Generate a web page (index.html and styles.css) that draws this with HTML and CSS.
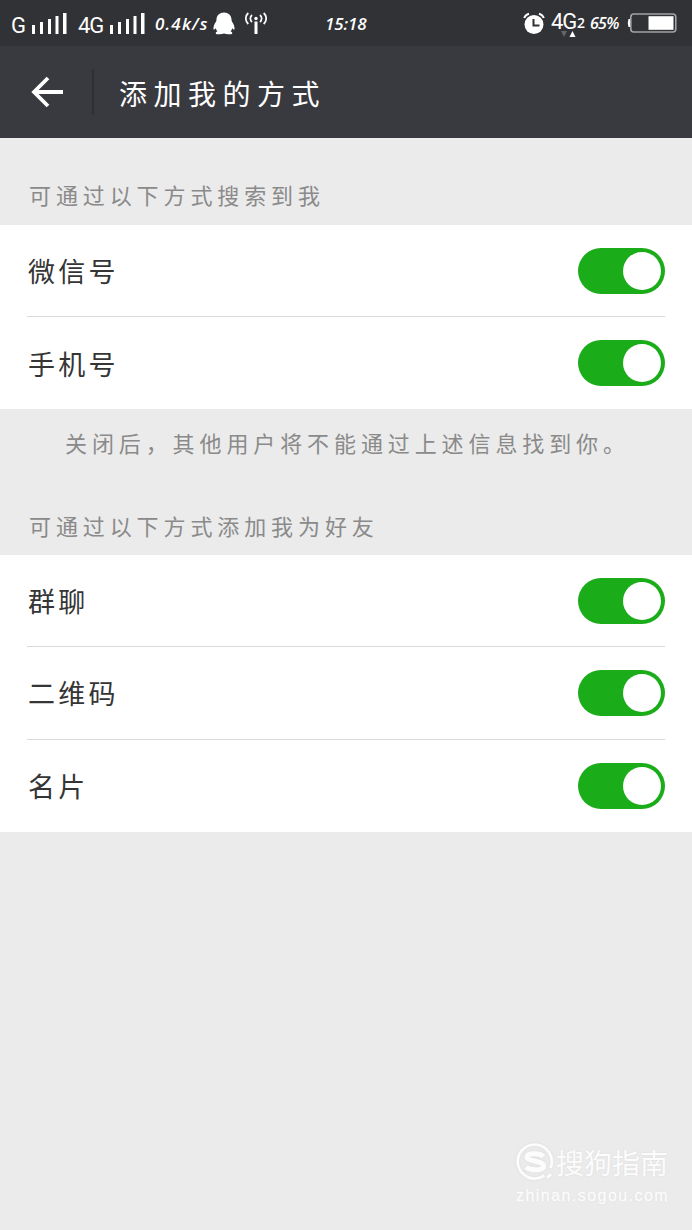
FILE: index.html
```
<!DOCTYPE html>
<html lang="zh-CN">
<head>
  <meta charset="UTF-8">
  <meta name="viewport" content="width=device-width, initial-scale=1">
  <title>添加我的方式</title>
  <link rel="stylesheet" href="styles.css">
</head>
<body>
  <!-- status bar -->
  <div class="status-bar">
    <div class="status-left">
      <span class="network g">G</span>
      <svg class="signal first" width="35" height="22" viewBox="0 0 35 22" fill="#fff">
        <path d="M0 12h3v9H0zM8 9h3v12H8zM16 6h3v15h-3zM23.500 3h3v18h-3zM31 0h3.500v21H31z"/>
      </svg>
      <span class="network g4">4G</span>
      <svg class="signal" width="35" height="22" viewBox="0 0 35 22" fill="#fff">
        <path d="M0 12h3v9H0zM8 9h3v12H8zM16 6h3v15h-3zM23.500 3h3v18h-3zM31 0h3.500v21H31z"/>
      </svg>
      <span class="speed">0.4k/s</span>
      <svg class="penguin" width="22" height="23" viewBox="0 0 22 23" fill="#fff">
        <path d="M11 0.500C6.600 0.500 3.500 3.600 3.500 7.500c0 1-.2 1.700-.7 2.600C1.100 12.500.2 15 .5 17.200c.3.900 1.200.3 2.200-1 .3 1.300.9 2.300 1.800 3.100-1.400.6-2 1.300-1.700 2.200.5 1.200 6 1 8.200.1 2.200.9 7.700 1.100 8.200-.1.300-.9-.3-1.600-1.700-2.200.9-.8 1.500-1.800 1.800-3.100 1 1.300 1.900 1.900 2.200 1 .3-2.200-.6-4.700-2.300-7.100-.5-.9-.7-1.600-.7-2.600C18.500 3.600 15.400.5 11 .5z"/>
      </svg>
      <svg class="antenna" width="22" height="22" viewBox="0 0 22 22" fill="none" stroke="#fff" stroke-width="1.700">
        <path d="M3.300 1C0 4 0 9 3.300 12M7 3C4.800 5 4.800 8 7 10M15 3c2.200 2 2.200 5 0 7M18.700 1C22 4 22 9 18.700 12"/>
        <circle cx="11" cy="6.500" r="1.700" fill="#fff" stroke="none"/>
        <path d="M11 9.500V22" stroke-width="3"/>
      </svg>
    </div>
    <span class="clock">15:18</span>
    <div class="status-right">
      <svg width="22" height="23" viewBox="0 0 22 23">
        <circle cx="11" cy="12.500" r="9.500" fill="#fff"/>
        <path d="M1.200 6A7 7 0 0 1 6 1.700M16 1.700A7 7 0 0 1 20.800 6" fill="none" stroke="#fff" stroke-width="2"/>
        <path d="M10.500 7v6.500h6" fill="none" stroke="#313236" stroke-width="2"/>
      </svg>
      <div class="data">
        <span class="network g4">4G</span><span class="sim">2</span>
        <svg class="arrows" width="16" height="7" viewBox="0 0 16 7">
          <path d="M1 0h6L4 6z" fill="#65666a"/>
          <path d="M9.500 6h6l-3-6z" fill="#fff"/>
        </svg>
      </div>
      <span class="percent">65%</span>
      <svg class="battery" width="50" height="20" viewBox="0 0 50 20">
        <path d="M3 6H1.500Q0 10 1.500 14H3z" fill="#fff"/>
        <rect x="3.800" y="1" width="45" height="18" rx="3" fill="none" stroke="#a2a3a5" stroke-width="1.600"/>
        <path d="M21.500 3.200H46.500v13.600h-25z" fill="#fff"/>
      </svg>
    </div>
  </div>

  <div class="nav-bar">
    <svg class="back" width="32" height="32" viewBox="0 0 32 32" fill="none" stroke="#fff" stroke-width="3.800">
      <path d="M17 2L3 16l14 14M3 16h29"/>
    </svg>
    <div class="nav-line"></div>
    <h1>添加我的方式</h1>
  </div>

  <div class="section-title">可通过以下方式搜索到我</div>
  <div class="list">
    <div class="row"><span>微信号</span><div class="switch"></div></div>
    <div class="row"><span>手机号</span><div class="switch"></div></div>
  </div>
  <p class="note">关闭后，其他用户将不能通过上述信息找到你。</p>

  <div class="section-title second">可通过以下方式添加我为好友</div>
  <div class="list friends">
    <div class="row"><span>群聊</span><div class="switch"></div></div>
    <div class="row"><span>二维码</span><div class="switch"></div></div>
    <div class="row"><span>名片</span><div class="switch"></div></div>
  </div>

  <div class="watermark">
    <div class="brand">
      <svg width="38" height="38" viewBox="0 0 38 38" fill="none" stroke="#fcfcfc">
        <path d="M28.500 32.500A17 17 0 1 1 34.500 25" stroke-width="2.800"/>
        <path d="M27.500 13.500C24 10 11 9.500 11 14s16.500 3.500 16.500 9-13.500 4.500-17.500 1" stroke-width="5"/>
        <path d="M31 35l4-4" stroke-width="3"/>
      </svg>
      <span>搜狗指南</span>
    </div>
    <div class="site">zhinan.sogou.com</div>
  </div>
</body>
</html>
```
FILE: styles.css
```
* {
  box-sizing: border-box;
  margin: 0;
  padding: 0;
}

body {
  position: relative;
  height: 1230px;
  overflow: hidden;
  background-color: #ebebeb;
  font-family: "Noto Sans CJK SC", sans-serif;
}

svg {
  display: block;
  flex-shrink: 0;
}

/* status bar */
.status-bar {
  display: flex;
  align-items: center;
  height: 46px;
  padding: 0 15px 0 11px;
  background-color: #313236;
  color: #fff;
  white-space: nowrap;
}

.status-left {
  display: flex;
  align-items: center;
  width: 314px;
}

.network {
  font-family: Roboto, sans-serif;
  font-size: 22px;
  line-height: 24px;
}

.g {
  width: 21px;
  padding-top: 5px;
}

.g4 {
  width: 32px;
  padding-top: 5px;
  letter-spacing: -1px;
}

.signal {
  margin-top: 2px;
}

.signal.first {
  margin-right: 11px;
}

.speed,
.clock,
.percent {
  font-family: "Open Sans", sans-serif;
  font-style: italic;
  font-weight: 600;
  line-height: 24px;
}

.speed {
  width: 57px;
  margin-left: 10px;
  margin-top: 1px;
  font-size: 17px;
  letter-spacing: 1.2px;
}

.penguin {
  margin-left: 1px;
}

.antenna {
  margin-left: 10px;
}

.clock {
  font-size: 17px;
  margin-top: 1px;
  letter-spacing: -0.1px;
}

.status-right {
  display: flex;
  align-items: center;
  margin-left: auto;
}

.data {
  position: relative;
  display: flex;
  align-items: center;
  width: 39px;
  margin-left: 6px;
}

.data .network {
  width: 26px;
  padding: 0 0 2px;
}

.sim {
  font-family: "Open Sans", sans-serif;
  font-size: 14px;
  font-weight: 600;
  line-height: 20px;
}

.arrows {
  position: absolute;
  left: 9px;
  bottom: -2px;
}

.percent {
  width: 37px;
  font-size: 16px;
  letter-spacing: -0.7px;
}

/* title bar */
.nav-bar {
  display: flex;
  align-items: center;
  height: 92px;
  padding-left: 31px;
  background-color: #393a3f;
}

.nav-line {
  width: 2px;
  height: 46px;
  margin: 0 25px 0 29px;
  background-color: #2f3034;
}

.nav-bar h1 {
  color: #fff;
  font-size: 28px;
  font-weight: 400;
  line-height: 40px;
  letter-spacing: 6.5px;
  padding-top: 2px;
}

/* settings list */
.section-title {
  height: 87px;
  padding: 41px 29px 0;
  color: #8a8a8a;
  font-size: 22px;
  line-height: 30px;
  letter-spacing: 4.9px;
}

.note {
  height: 73px;
  padding: 18px 0 0 65px;
  color: #8a8a8a;
  font-size: 22px;
  line-height: 30px;
  letter-spacing: 4.9px;
  white-space: nowrap;
}

.section-title.second {
  height: 73px;
  padding-top: 28px;
}

.list {
  padding: 0 27px;
  background-color: #fff;
}

.row {
  display: flex;
  align-items: center;
  justify-content: space-between;
  height: 92px;
  padding-left: 1px;
  border-bottom: 1px solid #d9d9d9;
  color: #353535;
  font-size: 27px;
  letter-spacing: 3.2px;
}

.row:last-child {
  border-bottom: none;
}

.friends .row {
  height: 92.3px;
}

.switch {
  width: 87px;
  height: 46px;
  padding: 4px;
  border-radius: 23px;
  background-color: #1aad19;
}

.switch::after {
  content: "";
  display: block;
  width: 38px;
  height: 38px;
  margin-left: auto;
  border-radius: 50%;
  background-color: #fff;
}

/* watermark over the page corner */
.watermark {
  position: absolute;
  left: 516px;
  top: 1143px;
  color: #fcfcfc;
  text-shadow: 0 0 2px #d8d8d8;
}

.brand {
  display: flex;
  align-items: center;
  gap: 2px;
  height: 38px;
  font-size: 28px;
  font-weight: 400;
  white-space: nowrap;
}

.brand svg {
  filter: drop-shadow(0 0 1px #d8d8d8);
}

.site {
  margin-top: 5px;
  font-family: "Liberation Sans", Arial, sans-serif;
  font-size: 16px;
  line-height: 20px;
  letter-spacing: 1.45px;
  -webkit-text-stroke: 0.3px #fcfcfc;
}
```
